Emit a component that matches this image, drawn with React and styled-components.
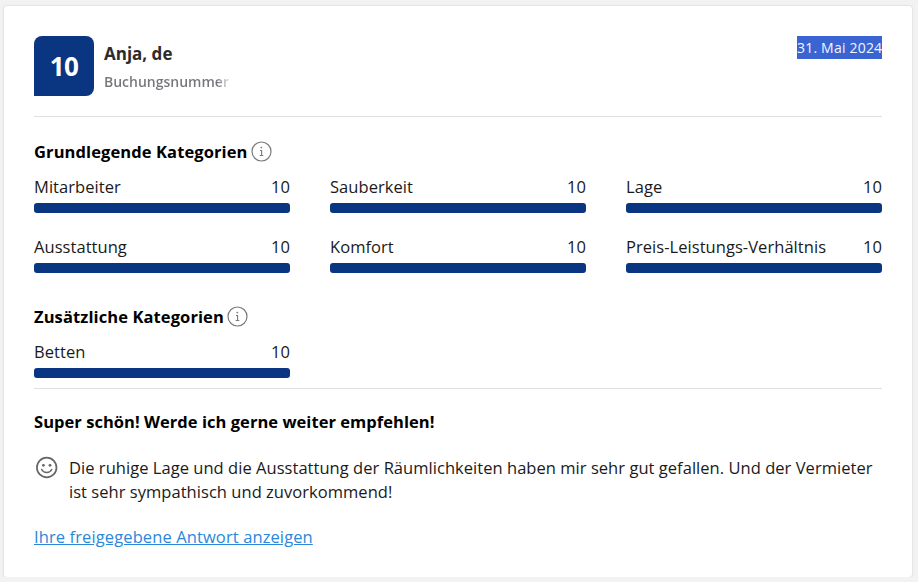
import React from "react";
import styled, { createGlobalStyle } from "styled-components";

const Global = createGlobalStyle`
  html, body { margin: 0; padding: 0; background: #f2f2f2; }
  body { font-family: "Open Sans", "Noto Sans", sans-serif; color: #1a1a1a; }
`;

const Card = styled.div`
  width: 908px;
  height: 571px;
  box-sizing: border-box;
  margin: 6px 0 0 4px;
  padding: 30px;
  background: #fff;
  border-radius: 3px;
  box-shadow: 0 0 2px rgba(0, 0, 0, 0.2);
`;

const Header = styled.div`
  display: flex;
  justify-content: space-between;
  align-items: flex-start;
  padding-bottom: 20px;
  border-bottom: 1px solid #e0e0e0;
`;

const Guest = styled.div`
  display: flex;
  gap: 10px;
`;

const Badge = styled.div`
  width: 60px;
  height: 60px;
  display: flex;
  align-items: center;
  justify-content: center;
  background: #0a3580;
  color: #fff;
  font-size: 26px;
  font-weight: 700;
  letter-spacing: -0.6px;
  border-radius: 8px 8px 8px 0;
`;

const GuestText = styled.div`
  display: flex;
  flex-direction: column;
  gap: 8px;
  padding-top: 7px;
`;

const Name = styled.div`
  font-size: 17px;
  line-height: 22px;
  font-weight: 700;
  color: #2b2b2b;
`;

const Booking = styled.div`
  font-size: 14px;
  line-height: 18px;
  font-weight: 600;
  width: 126px;
  overflow: hidden;
  white-space: nowrap;
  background: linear-gradient(90deg, #77757a 90%, #eee 100%);
  -webkit-background-clip: text;
  background-clip: text;
  color: transparent;
`;

const DateText = styled.div`
  background: #3a64d2;
  color: #f2f5ff;
  font-size: 14px;
  line-height: 23px;
  letter-spacing: 0.2px;
  width: 85px;
  white-space: nowrap;
  text-align: right;
`;

const SectionTitle = styled.div`
  display: flex;
  align-items: center;
  gap: 3px;
  height: 24px;
  font-size: 16.5px;
  font-weight: 700;
  letter-spacing: 0.1px;
  color: #000;
`;

const FirstSection = styled.div`
  padding-top: 22px;
`;

const SecondSection = styled.div`
  padding-top: 31px;
`;

const Grid = styled.div`
  display: grid;
  grid-template-columns: repeat(3, 256px);
  column-gap: 40px;
  row-gap: 22px;
  margin-top: 12px;
`;

const Score = styled.div`
  display: flex;
  flex-direction: column;
  gap: 4px;
`;

const ScoreLine = styled.div`
  display: flex;
  justify-content: space-between;
  font-size: 16.5px;
  line-height: 24px;
  letter-spacing: 0.05px;
`;

const Bar = styled.div`
  height: 10px;
  background: #0a3580;
  border-radius: 3px;
`;

const Review = styled.div`
  margin-top: 10px;
  padding-top: 21px;
  border-top: 1px solid #e0e0e0;
`;

const Headline = styled.div`
  font-size: 16.5px;
  line-height: 24px;
  font-weight: 700;
  letter-spacing: 0.04px;
  color: #000;
`;

const Comment = styled.div`
  display: flex;
  gap: 11px;
  margin-top: 22px;
`;

const CommentText = styled.p`
  margin: 0;
  width: 812px;
  font-size: 16.5px;
  line-height: 24px;
  letter-spacing: 0.04px;
`;

const AnswerLink = styled.a`
  display: inline-block;
  margin-top: 21px;
  font-size: 16.5px;
  line-height: 24px;
  letter-spacing: 0.11px;
  color: #2b87da;
  text-decoration: underline;
`;

const InfoIcon = () => (
  <svg width="21" height="21" viewBox="0 0 21 21" fill="none" stroke="#7a7a7a">
    <circle cx="10.5" cy="10.5" r="9.5" strokeWidth="1.2" />
    <path d="M9 9.5h1.6v5M8.7 14.5h3.6" strokeWidth="1.1" />
    <circle cx="10.3" cy="6.6" r="0.7" fill="#7a7a7a" strokeWidth="0.4" />
  </svg>
);

const SmileIcon = () => (
  <svg width="24" height="24" viewBox="0 0 24 24" fill="none" stroke="#666" style={{ flex: "none" }}>
    <circle cx="12.7" cy="11.5" r="9.8" strokeWidth="1.7" />
    <circle cx="9.4" cy="9.3" r="1.4" fill="#666" stroke="none" />
    <circle cx="16" cy="9.3" r="1.4" fill="#666" stroke="none" />
    <path d="M7.7 13.5c1 2 2.8 3 5 3s4-1 5-3" strokeWidth="1.5" strokeLinecap="round" />
  </svg>
);

const ScoreItem = ({ label, value }) => (
  <Score>
    <ScoreLine>
      <span>{label}</span>
      <span>{value}</span>
    </ScoreLine>
    <Bar />
  </Score>
);

const basic = ["Mitarbeiter", "Sauberkeit", "Lage", "Ausstattung", "Komfort", "Preis-Leistungs-Verhältnis"];

export default function App() {
  return (
    <>
      <Global />
      <Card>
        <Header>
          <Guest>
            <Badge>10</Badge>
            <GuestText>
              <Name>Anja, de</Name>
              <Booking>Buchungsnummer</Booking>
            </GuestText>
          </Guest>
          <DateText>31. Mai 2024</DateText>
        </Header>
        <FirstSection>
          <SectionTitle>
            Grundlegende Kategorien <InfoIcon />
          </SectionTitle>
          <Grid>
            {basic.map((label) => (
              <ScoreItem key={label} label={label} value="10" />
            ))}
          </Grid>
        </FirstSection>
        <SecondSection>
          <SectionTitle>
            Zusätzliche Kategorien <InfoIcon />
          </SectionTitle>
          <Grid>
            <ScoreItem label="Betten" value="10" />
          </Grid>
        </SecondSection>
        <Review>
          <Headline>Super schön! Werde ich gerne weiter empfehlen!</Headline>
          <Comment>
            <SmileIcon />
            <CommentText>
              Die ruhige Lage und die Ausstattung der Räumlichkeiten haben mir sehr gut gefallen. Und der Vermieter ist sehr sympathisch und zuvorkommend!
            </CommentText>
          </Comment>
          <AnswerLink href="#">Ihre freigegebene Antwort anzeigen</AnswerLink>
        </Review>
      </Card>
    </>
  );
}
